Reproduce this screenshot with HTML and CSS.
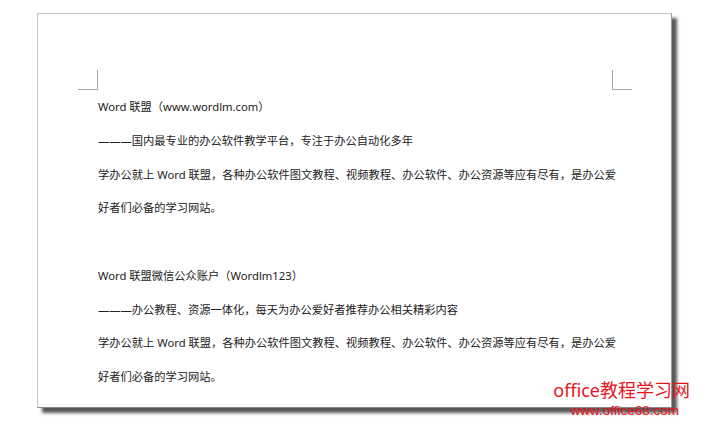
FILE: index.html
```html
<!DOCTYPE html>
<html lang="zh-CN">
<head>
<meta charset="utf-8">
<title>Word 联盟</title>
<link rel="stylesheet" href="styles.css">
</head>
<body>
<div class="page">
  <div class="marks">
    <span class="mark mark-left"></span>
    <span class="mark mark-right"></span>
  </div>
  <div class="text">
    <p>Word 联盟（www.wordlm.com）</p>
    <p>———国内最专业的办公软件教学平台，专注于办公自动化多年</p>
    <p>学办公就上 Word 联盟，各种办公软件图文教程、视频教程、办公软件、办公资源等应有尽有，是办公爱<br>好者们必备的学习网站。</p>
    <p class="blank">&nbsp;</p>
    <p>Word 联盟微信公众账户（Wordlm123）</p>
    <p>———办公教程、资源一体化，每天为办公爱好者推荐办公相关精彩内容</p>
    <p>学办公就上 Word 联盟，各种办公软件图文教程、视频教程、办公软件、办公资源等应有尽有，是办公爱<br>好者们必备的学习网站。</p>
  </div>
</div>
<div class="watermark">
  <div class="wm-title">office教程学习网</div>
  <div class="wm-url">www.office68.com</div>
</div>
</body>
</html>
```
FILE: styles.css
```css
html, body {
  margin: 0;
  padding: 0;
  background: #ffffff;
}
body {
  width: 710px;
  height: 429px;
  overflow: hidden;
  position: relative;
  font-family: "Noto Sans", "Noto Sans CJK SC", sans-serif;
}
.page {
  box-sizing: border-box;
  margin: 13px 0 0 37px;
  width: 635px;
  height: 395px;
  background: #fff;
  border: 1px solid #c4c4c4;
  border-right-color: #9a9a9a;
  border-bottom-color: #8a8a8a;
  box-shadow: 5px 5px 3px rgba(60, 60, 60, 0.85);
  padding: 56px 39px 0 40px;
}
.marks {
  display: flex;
  justify-content: space-between;
  height: 20px;
}
.mark {
  display: block;
  width: 19px;
  height: 19px;
  border-bottom: 1px solid #a8a8a8;
}
.mark-left {
  border-right: 1px solid #a8a8a8;
}
.mark-right {
  border-left: 1px solid #a8a8a8;
}
.text {
  padding: 0 10px 0 20px;
  color: #222222;
  font-size: 11.25px;
  line-height: 33.75px;
  white-space: nowrap;
}
.text p {
  margin: 0;
}
.watermark {
  position: absolute;
  right: 20px;
  top: 380px;
  color: #e8141e;
  text-align: right;
}
.wm-title {
  font-family: "Noto Sans", "Noto Sans CJK SC", sans-serif;
  font-size: 18px;
  line-height: 20px;
}
.wm-url {
  font-family: "Liberation Sans", Arial, sans-serif;
  font-size: 13.5px;
  line-height: 14px;
  margin-top: 4px;
  padding-right: 11px;
}
```
